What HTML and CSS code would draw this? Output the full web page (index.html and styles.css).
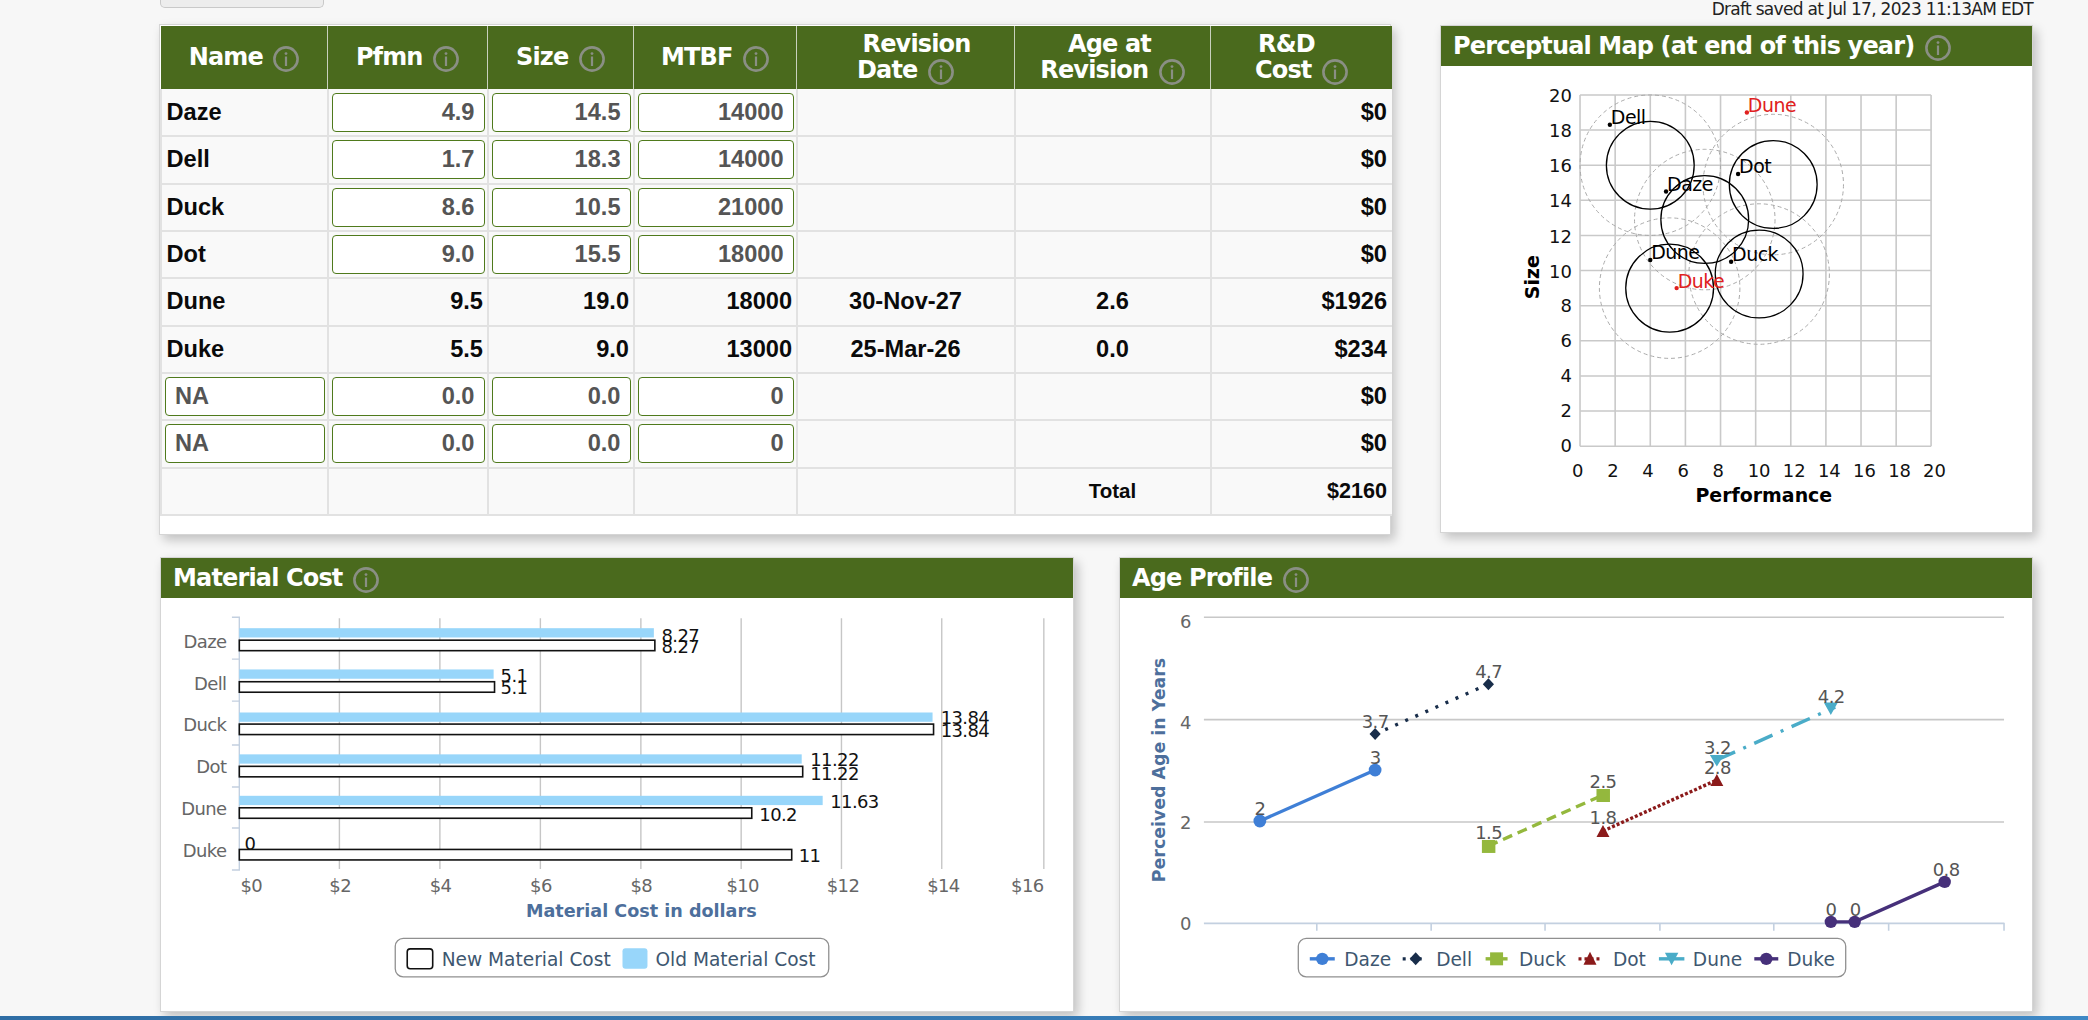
FILE: index.html
```html
<!DOCTYPE html>
<html lang="en">
<head>
<meta charset="utf-8">
<title>Product Design</title>
<link rel="stylesheet" href="styles.css">
</head>
<body>
<svg class="defs" width="0" height="0" aria-hidden="true">
  <symbol id="info" viewBox="0 0 26 26">
    <circle cx="13" cy="13" r="11.6" fill="none" stroke="#8a8f84" stroke-width="2.6"/>
    <circle cx="13" cy="7.6" r="1.4" fill="#8a8f84"/>
    <rect x="11.9" y="10.5" width="2.2" height="9.5" fill="#8a8f84"/>
  </symbol>
</svg>
<div class="page">
  <div class="topbar">
    <div class="stub-button"></div>
    <div class="draft">Draft saved at Jul 17, 2023 11:13AM EDT</div>
  </div>
  <div class="row-top">
    <section class="panel table-panel">
      <table class="design">
        <colgroup>
          <col class="c1"><col class="c2"><col class="c3"><col class="c4"><col class="c5"><col class="c6"><col class="c7">
        </colgroup>
        <thead>
          <tr>
            <th>Name <svg class="info"><use href="#info"/></svg></th>
            <th>Pfmn <svg class="info"><use href="#info"/></svg></th>
            <th>Size <svg class="info"><use href="#info"/></svg></th>
            <th>MTBF <svg class="info"><use href="#info"/></svg></th>
            <th><span class="first shift-rev">Revision</span>Date <svg class="info"><use href="#info"/></svg></th>
            <th><span class="first shift-age">Age at</span>Revision <svg class="info"><use href="#info"/></svg></th>
            <th><span class="first shift-rd">R&amp;D</span>Cost <svg class="info"><use href="#info"/></svg></th>
          </tr>
        </thead>
        <tbody>
          <tr><td>Daze</td><td class="hasfield"><span class="field">4.9</span></td><td class="hasfield"><span class="field">14.5</span></td><td class="hasfield"><span class="field">14000</span></td><td></td><td></td><td class="num">$0</td></tr>
          <tr><td>Dell</td><td class="hasfield"><span class="field">1.7</span></td><td class="hasfield"><span class="field">18.3</span></td><td class="hasfield"><span class="field">14000</span></td><td></td><td></td><td class="num">$0</td></tr>
          <tr><td>Duck</td><td class="hasfield"><span class="field">8.6</span></td><td class="hasfield"><span class="field">10.5</span></td><td class="hasfield"><span class="field">21000</span></td><td></td><td></td><td class="num">$0</td></tr>
          <tr><td>Dot</td><td class="hasfield"><span class="field">9.0</span></td><td class="hasfield"><span class="field">15.5</span></td><td class="hasfield"><span class="field">18000</span></td><td></td><td></td><td class="num">$0</td></tr>
          <tr><td>Dune</td><td class="num">9.5</td><td class="num">19.0</td><td class="num">18000</td><td class="mid">30-Nov-27</td><td class="mid">2.6</td><td class="num">$1926</td></tr>
          <tr><td>Duke</td><td class="num">5.5</td><td class="num">9.0</td><td class="num">13000</td><td class="mid">25-Mar-26</td><td class="mid">0.0</td><td class="num">$234</td></tr>
          <tr><td class="hasfield"><span class="field left">NA</span></td><td class="hasfield"><span class="field">0.0</span></td><td class="hasfield"><span class="field">0.0</span></td><td class="hasfield"><span class="field">0</span></td><td></td><td></td><td class="num">$0</td></tr>
          <tr><td class="hasfield"><span class="field left">NA</span></td><td class="hasfield"><span class="field">0.0</span></td><td class="hasfield"><span class="field">0.0</span></td><td class="hasfield"><span class="field">0</span></td><td></td><td></td><td class="num">$0</td></tr>
          <tr class="totals"><td></td><td></td><td></td><td></td><td></td><td class="mid">Total</td><td class="num">$2160</td></tr>
        </tbody>
      </table>
    </section>

    <section class="panel map-panel">
      <h2 class="panel-head">Perceptual Map (at end of this year) <svg class="info"><use href="#info"/></svg></h2>
      <svg class="chart map-chart" viewBox="1441 65 592 467">
        <g class="grid">
          <path d="M1580.2 446H1932M1580.2 410.8H1932M1580.2 375.6H1932M1580.2 340.4H1932M1580.2 305.2H1932M1580.2 270H1932M1580.2 234.8H1932M1580.2 199.6H1932M1580.2 164.4H1932M1580.2 129.2H1932M1580.2 94H1932"/>
          <path d="M1580.2 94V446M1615.4 94V446M1650.6 94V446M1685.8 94V446M1721 94V446M1756.2 94V446M1791.4 94V446M1826.6 94V446M1861.8 94V446M1897 94V446M1932 94V446"/>
        </g>
        <g class="ring-outer">
          <circle cx="1650.6" cy="164.4" r="70.4"/>
          <circle cx="1705.2" cy="218.9" r="70.4"/>
          <circle cx="1773.8" cy="183.8" r="70.4"/>
          <circle cx="1759.7" cy="273.5" r="70.4"/>
          <circle cx="1670" cy="287.6" r="70.4"/>
        </g>
        <g class="ring-inner">
          <circle cx="1650.6" cy="164.4" r="44"/>
          <circle cx="1705.2" cy="218.9" r="44"/>
          <circle cx="1773.8" cy="183.8" r="44"/>
          <circle cx="1759.7" cy="273.5" r="44"/>
          <circle cx="1670" cy="287.6" r="44"/>
        </g>
        <g class="pts">
          <circle cx="1666.4" cy="190.8" r="2.2"/><text x="1667.4" y="190">Daze</text>
          <circle cx="1610.1" cy="123.9" r="2.2"/><text x="1611.1" y="123.6">Dell</text>
          <circle cx="1731.6" cy="261.2" r="2.2"/><text x="1732.6" y="260.8">Duck</text>
          <circle cx="1738.6" cy="173.2" r="2.2"/><text x="1739.6" y="172.5">Dot</text>
          <circle cx="1650.6" cy="259.4" r="2.2"/><text x="1651.6" y="258.8">Dune</text>
        </g>
        <g class="pts red">
          <circle cx="1747.4" cy="111.6" r="2.2"/><text x="1748.4" y="111.2">Dune</text>
          <circle cx="1677" cy="287.6" r="2.2"/><text x="1678" y="287">Duke</text>
        </g>
        <g class="map-y">
          <text x="1572" y="101">20</text><text x="1572" y="136">18</text><text x="1572" y="171">16</text><text x="1572" y="206">14</text><text x="1572" y="242">12</text><text x="1572" y="277">10</text><text x="1572" y="312">8</text><text x="1572" y="347">6</text><text x="1572" y="382">4</text><text x="1572" y="417">2</text><text x="1572" y="452">0</text>
        </g>
        <g class="map-x">
          <text x="1572.2" y="476.5">0</text><text x="1607.4" y="476.5">2</text><text x="1642.6" y="476.5">4</text><text x="1677.8" y="476.5">6</text><text x="1713" y="476.5">8</text><text x="1748.2" y="476.5">10</text><text x="1783.4" y="476.5">12</text><text x="1818.6" y="476.5">14</text><text x="1853.8" y="476.5">16</text><text x="1889" y="476.5">18</text><text x="1924" y="476.5">20</text>
        </g>
        <text class="map-title" x="1764.4" y="501.5">Performance</text>
        <text class="map-title" transform="translate(1539.5 276.7) rotate(-90)">Size</text>
      </svg>
    </section>
  </div>

  <div class="row-bottom">
    <section class="panel chart-panel">
      <h2 class="panel-head">Material Cost <svg class="info"><use href="#info"/></svg></h2>
      <svg class="chart wide-chart" viewBox="161 598 913 414">
        <path class="grid-thin" d="M339.6 618V869M440.2 618V869M540.8 618V869M641.4 618V869M741.8 618V869M842.2 618V869M942.6 618V869M1044.8 618V869"/>
        <path class="cat-axis" d="M232 617H239.4V870H232M232 659H239.4M232 701H239.4M232 745H239.4M232 787H239.4M232 828H239.4"/>
        <g class="old-bars">
          <rect x="239.4" y="628" width="415" height="9.3"/>
          <rect x="239.4" y="669.3" width="254.6" height="9.3"/>
          <rect x="239.4" y="712.4" width="694" height="9.3"/>
          <rect x="239.4" y="754.3" width="563" height="9.3"/>
          <rect x="239.4" y="795.8" width="584" height="9.3"/>
        </g>
        <g class="new-bars">
          <rect x="239.4" y="640" width="416" height="10.5"/>
          <rect x="239.4" y="681.6" width="255.5" height="10.5"/>
          <rect x="239.4" y="724" width="695" height="10.5"/>
          <rect x="239.4" y="766.3" width="564" height="10.5"/>
          <rect x="239.4" y="807.8" width="513" height="10.5"/>
          <rect x="239.4" y="849.5" width="553" height="10.5"/>
        </g>
        <g class="values">
          <text x="662" y="641.5">8.27</text><text x="662" y="653">8.27</text>
          <text x="501" y="681.5">5.1</text><text x="501" y="694">5.1</text>
          <text x="941.5" y="724">13.84</text><text x="941.5" y="736.5">13.84</text>
          <text x="811" y="766">11.22</text><text x="811" y="779.5">11.22</text>
          <text x="831" y="808">11.63</text><text x="760" y="821.5">10.2</text>
          <text x="244.5" y="850">0</text><text x="799.5" y="862.5">11</text>
        </g>
        <g class="cats">
          <text x="226.5" y="648">Daze</text><text x="226.5" y="690">Dell</text><text x="226.5" y="731">Duck</text><text x="226.5" y="773">Dot</text><text x="226.5" y="815">Dune</text><text x="226.5" y="857">Duke</text>
        </g>
        <g class="xticks">
          <text x="240.5" y="892">$0</text><text x="329.5" y="892">$2</text><text x="430" y="892">$4</text><text x="530.5" y="892">$6</text><text x="631" y="892">$8</text><text x="727" y="892">$10</text><text x="827.5" y="892">$12</text><text x="928" y="892">$14</text><text x="1012" y="892">$16</text>
        </g>
        <text class="axis-title" x="641.8" y="917.5">Material Cost in dollars</text>
        <rect class="legend-box" x="395.5" y="938.5" width="434" height="38.5" rx="8"/>
        <rect class="swatch-new" x="407.5" y="949" width="25.5" height="20" rx="3"/>
        <text class="legend-text" x="442" y="966">New Material Cost</text>
        <rect class="swatch-old" x="623" y="948.5" width="25" height="20.5" rx="3"/>
        <text class="legend-text" x="656" y="966">Old Material Cost</text>
      </svg>
    </section>

    <section class="panel chart-panel">
      <h2 class="panel-head">Age Profile <svg class="info"><use href="#info"/></svg></h2>
      <svg class="chart wide-chart" viewBox="1120 598 913 414">
        <path class="age-grid" d="M1204 617H2005M1204 719.5H2005M1204 822H2005"/>
        <path class="age-axis" d="M1204 923.5H2005M1317 923V931M1431.5 923V931M1545.5 923V931M1660.5 923V931M1774.5 923V931M1889.5 923V931M2005 923V931"/>
        <g class="yticks">
          <text x="1191" y="627.5">6</text><text x="1191" y="728.5">4</text><text x="1191" y="829.5">2</text><text x="1191" y="930.5">0</text>
        </g>
        <text class="axis-title age-title" transform="translate(1165 770) rotate(-90)">Perceived Age in Years</text>

        <path class="s-daze" d="M1260 821L1375.4 770"/>
        <circle class="f-daze" cx="1260" cy="821" r="6.4"/><circle class="f-daze" cx="1375.4" cy="770" r="6.4"/>

        <path class="s-dell" d="M1375.4 734L1488.8 684"/>
        <path class="f-dell" d="M1375.4 728L1381 734L1375.4 740L1369.8 734ZM1488.8 678L1494.4 684L1488.8 690L1483.2 684Z"/>

        <path class="s-duck" d="M1488.8 846L1603.5 795"/>
        <rect class="f-duck" x="1482.3" y="840" width="13.5" height="13"/><rect class="f-duck" x="1597" y="789" width="13.5" height="13"/>

        <path class="s-dot" d="M1603.5 831L1717.5 780"/>
        <path class="f-dot" d="M1603.5 825L1610 837H1597ZM1717.5 774L1724 786H1711Z"/>

        <path class="s-dune" d="M1717.5 760L1836 707"/>
        <path class="f-dune" d="M1710.5 755H1724.5L1717.5 766.5ZM1824.6 702.5H1838.6L1831.6 715Z"/>

        <path class="s-duke" d="M1831.6 922H1855.5L1945.6 882"/>
        <circle class="f-duke" cx="1831.6" cy="922" r="6.2"/><circle class="f-duke" cx="1855.5" cy="922" r="6.2"/><circle class="f-duke" cx="1945.6" cy="882" r="6.2"/>

        <g class="pt-labels">
          <text x="1260" y="815">2</text><text x="1375.4" y="763.5">3</text>
          <text x="1375.4" y="728">3.7</text><text x="1489" y="677.5">4.7</text>
          <text x="1489" y="839.5">1.5</text><text x="1603.5" y="788">2.5</text>
          <text x="1603.5" y="824.5">1.8</text><text x="1718" y="773.5">2.8</text>
          <text x="1718" y="754">3.2</text><text x="1832" y="703">4.2</text>
          <text x="1831.6" y="916.5">0</text><text x="1856" y="916.5">0</text><text x="1947" y="876">0.8</text>
        </g>

        <rect class="legend-box" x="1298.5" y="938.5" width="548" height="38.5" rx="8"/>
        <path class="s-daze leg" d="M1310 959H1335"/><circle class="f-daze" cx="1322.5" cy="959" r="6.2"/>
        <text class="legend-text" x="1344.5" y="966">Daze</text>
        <path class="s-dell leg" d="M1403 959H1423"/><path class="f-dell" d="M1416 952.5L1422 959L1416 965.5L1410 959Z"/>
        <text class="legend-text" x="1436.5" y="966">Dell</text>
        <path class="s-duck leg" d="M1486 959H1508"/><rect class="f-duck" x="1490.5" y="952.5" width="13" height="13"/>
        <text class="legend-text" x="1519.5" y="966">Duck</text>
        <path class="s-dot leg" d="M1579 959H1602"/><path class="f-dot" d="M1590.5 952L1597 965H1584Z"/>
        <text class="legend-text" x="1613.5" y="966">Dot</text>
        <path class="s-dune leg" d="M1659.5 959H1685"/><path class="f-dune" d="M1665.5 953H1679L1672.2 965.5Z"/>
        <text class="legend-text" x="1693.5" y="966">Dune</text>
        <path class="s-duke leg" d="M1755 959H1779"/><circle class="f-duke" cx="1767" cy="959" r="6.2"/>
        <text class="legend-text" x="1788" y="966">Duke</text>
      </svg>
    </section>
  </div>
  <footer class="foot-bar"></footer>
</div>
</body>
</html>
```

FILE: styles.css
```css
* { box-sizing: border-box; }
html, body { margin: 0; padding: 0; }
body {
  background: #f7f7f7;
  font-family: "DejaVu Sans", sans-serif;
  color: #111;
  overflow: hidden;
}
.defs { display: block; height: 0; }
.page {
  width: 2088px;
  height: 1020px;
  display: flex;
  flex-direction: column;
  overflow: hidden;
}
.topbar {
  height: 24px;
  padding-left: 160px;
  padding-right: 55px;
  display: flex;
  justify-content: space-between;
  align-items: flex-start;
}
.stub-button {
  width: 164px;
  height: 8px;
  background: #ededed;
  border: 1px solid #c9c9c9;
  border-top: 0;
  border-radius: 0 0 5px 5px;
}
.draft {
  font-size: 17px;
  letter-spacing: -0.7px;
  line-height: 19px;
  color: #222;
  white-space: nowrap;
}
.row-top {
  height: 511px;
  padding-left: 159px;
  display: flex;
  gap: 49px;
  align-items: flex-start;
}
.row-bottom {
  margin-top: 22px;
  padding-left: 160px;
  display: flex;
  gap: 45px;
}
.panel {
  background: #fff;
  border: 1px solid #d5d5d5;
  box-shadow: 4px 5px 10px rgba(0, 0, 0, .22);
}
.table-panel {
  width: 1232px;
  height: 511px;
  padding: 1px 0 0 0;
}
.map-panel {
  width: 593px;
  height: 508px;
  margin-top: 1px;
}
.chart-panel {
  width: 914px;
  height: 455px;
}
.panel-head {
  margin: 0;
  height: 40px;
  background: #4a6a1d;
  color: #fff;
  font-size: 24px;
  letter-spacing: -0.85px;
  line-height: 40px;
  font-weight: 700;
  padding-left: 12px;
  white-space: nowrap;
}
.chart { display: block; }
.map-chart { width: 591px; height: 466px; }
.wide-chart { width: 912px; height: 414px; }
.info {
  width: 26px;
  height: 26px;
  vertical-align: -7px;
  margin-left: 3px;
}

/* table */
.design {
  width: 1230.5px;
  table-layout: fixed;
  border-collapse: collapse;
  font-family: "Liberation Sans", Arial, sans-serif;
}
.c1 { width: 166.5px; }
.c2 { width: 160px; }
.c3 { width: 146px; }
.c4 { width: 163px; }
.c5 { width: 218px; }
.c6 { width: 196px; }
.c7 { width: 181.5px; }
.design th {
  height: 63px;
  padding: 0;
  background: #4a6a1d;
  color: #fff;
  font-family: "DejaVu Sans", sans-serif;
  font-size: 24px;
  letter-spacing: -0.85px;
  line-height: 26px;
  font-weight: 700;
  text-align: center;
  border-left: 1px solid #c8d0bd;
}
.design th:first-child { border-left: 0; }
.first { display: block; }
.shift-rev { padding-left: 22px; }
.shift-age { padding-right: 6px; }
.shift-rd { padding-right: 30px; }
.design td {
  height: 47.33px;
  padding: 0 5px;
  background: #f9f9f9;
  border: 2px solid #e2e2e2;
  border-width: 0 0 2px 2px;
  font-size: 23.6px;
  font-weight: 700;
  color: #0a0a0a;
  white-space: nowrap;
}
.design td:first-child { border-left: 2px solid #e2e2e2; padding-left: 4.5px; }
.design td.num { padding-right: 3.5px; }
.design td.num:last-child { padding-right: 5px; }
.design td.hasfield { padding: 0 2px 0 3px; }
.num { text-align: right; }
.mid { text-align: center; }
.field {
  display: block;
  height: 39px;
  line-height: 37px;
  padding: 0 9px;
  text-align: right;
  color: #555;
  background: #fff;
  border: 1px solid #4f7a1c;
  border-radius: 4px;
}
.field.left { text-align: left; }
.design .totals td { height: 47.5px; }
.design .totals .mid { font-size: 20.5px; }
.design .totals .num { font-size: 21.6px; }

/* perceptual map */
.grid path { fill: none; stroke: #c9c9c9; stroke-width: 1.6; }
.ring-outer circle { fill: none; stroke: #aaa; stroke-width: 1; stroke-dasharray: 4 3; }
.ring-inner circle { fill: none; stroke: #000; stroke-width: 1.3; }
.pts circle { fill: #000; }
.pts text { fill: #000; font-size: 19px; letter-spacing: -0.5px; }
.red circle { fill: #e02020; }
.red text { fill: #e02020; }
.map-y text { font-size: 18px; fill: #111; text-anchor: end; }
.map-x text { font-size: 18px; fill: #111; }
.map-title { font-size: 19px; font-weight: 700; fill: #000; text-anchor: middle; }

/* material cost */
.grid-thin { fill: none; stroke: #c6c6c6; stroke-width: 1.4; }
.cat-axis { fill: none; stroke: #c3d0e0; stroke-width: 1.4; }
.old-bars rect { fill: #98d6fa; }
.new-bars rect { fill: #fff; stroke: #111; stroke-width: 1.6; }
.values text { font-size: 18px; letter-spacing: -0.6px; fill: #111; }
.cats text { font-size: 18px; letter-spacing: -0.6px; fill: #666; text-anchor: end; }
.xticks text { font-size: 18px; letter-spacing: -0.6px; fill: #666; }
.axis-title {
  font-size: 17.6px;
  font-weight: 700;
  fill: #4d6f9c;
  text-anchor: middle;
}
.age-title { font-size: 17.4px; }
.legend-box { fill: #fff; stroke: #909090; stroke-width: 1.3; }
.legend-text { font-size: 18.6px; fill: #3e5770; }
.swatch-new { fill: #fff; stroke: #111; stroke-width: 1.6; }
.swatch-old { fill: #98d6fa; }

/* age profile */
.age-grid { fill: none; stroke: #c8c8c8; stroke-width: 1.6; }
.age-axis { fill: none; stroke: #c3d0e0; stroke-width: 1.6; }
.yticks text { font-size: 18px; letter-spacing: -0.6px; fill: #666; text-anchor: end; }
.pt-labels text { font-size: 18px; letter-spacing: -0.6px; fill: #555; text-anchor: middle; }
.s-daze, .s-dell, .s-duck, .s-dot, .s-dune, .s-duke { fill: none; stroke-width: 3.4; }
.s-daze { stroke: #3f7fd6; }
.f-daze { fill: #3f7fd6; }
.s-dell { stroke: #182d4a; stroke-dasharray: 3 8; }
.f-dell { fill: #182d4a; }
.s-duck { stroke: #94b83d; stroke-dasharray: 10 6; }
.f-duck { fill: #94b83d; }
.s-dot { stroke: #8b1a1a; stroke-dasharray: 3 2; }
.f-dot { fill: #8b1a1a; }
.s-dune { stroke: #4aacc8; stroke-dasharray: 20 9 3 9; }
.f-dune { fill: #4aacc8; }
.s-duke { stroke: #46307a; }
.f-duke { fill: #46307a; }
.leg { stroke-dasharray: none; }
.s-dell.leg { stroke-dasharray: 3 5; }
.s-dot.leg { stroke-dasharray: 3 3; }

.foot-bar {
  margin-top: 4px;
  height: 4px;
  background: linear-gradient(90deg, #2f6ea5, #3f88c5);
}
```
